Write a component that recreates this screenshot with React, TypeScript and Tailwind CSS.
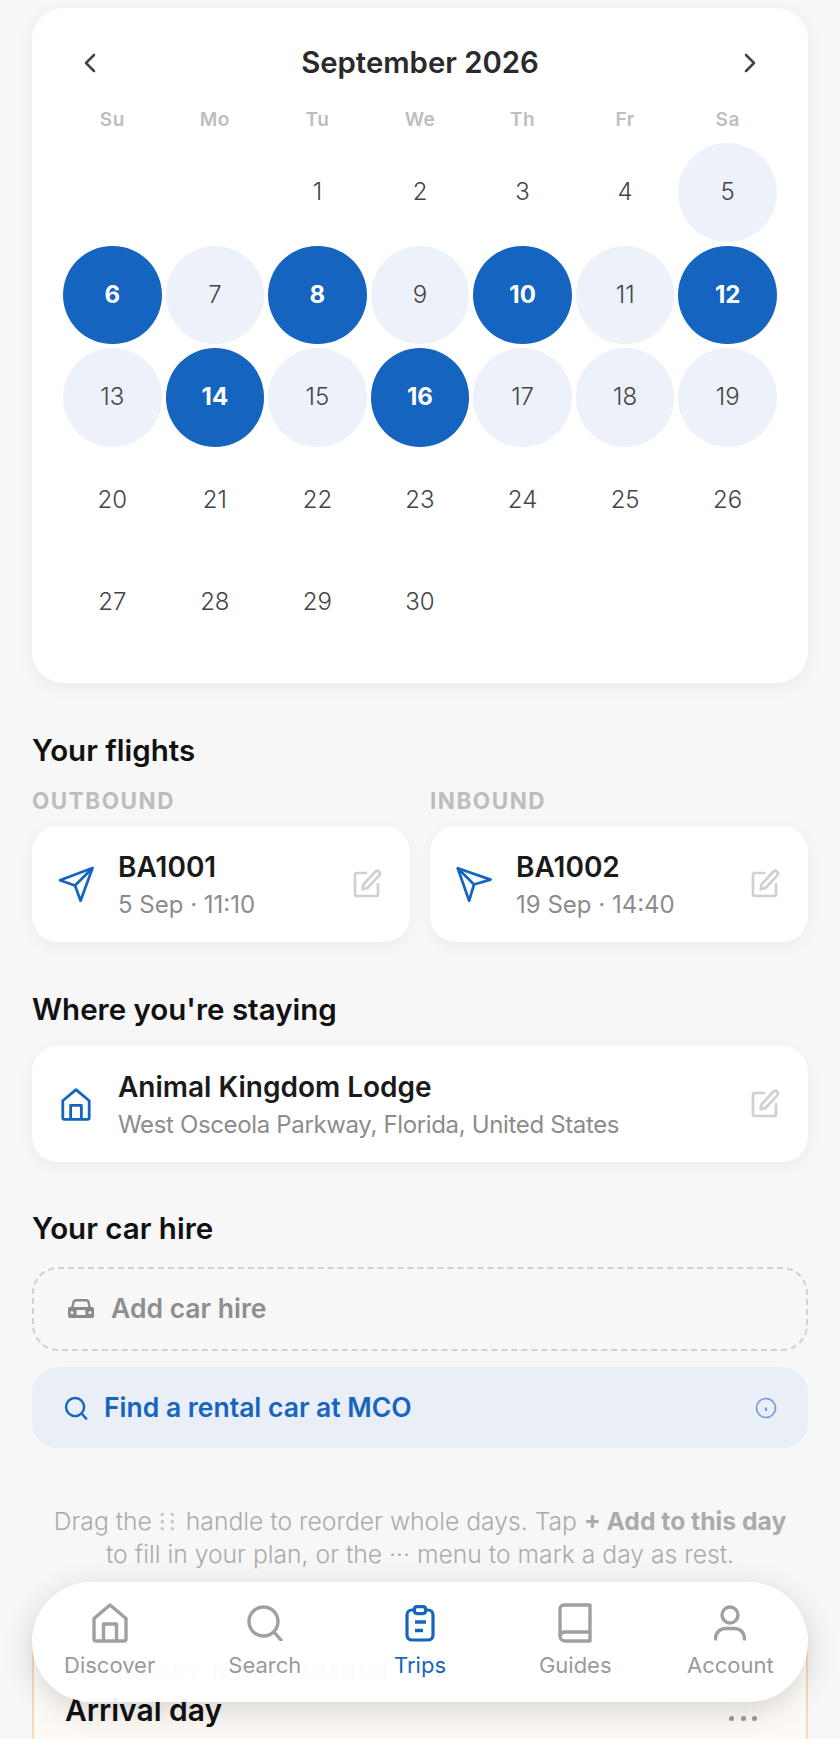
import React from "react";

const weekdays = ["Su", "Mo", "Tu", "We", "Th", "Fr", "Sa"];
const selected = [6, 8, 10, 12, 14, 16];
const inRange = [5, 7, 9, 11, 13, 15, 17, 18, 19];
const days: (number | null)[] = [
  null,
  null,
  ...Array.from({ length: 30 }, (_, i) => i + 1),
];

function Chevron({ dir }: { dir: "left" | "right" }) {
  return (
    <svg width="24" height="24" viewBox="0 0 24 24" fill="none" stroke="#444" strokeWidth="2.6" strokeLinecap="round" strokeLinejoin="round">
      <path d={dir === "left" ? "M16 4l-8 8 8 8" : "M8 4l8 8-8 8"} />
    </svg>
  );
}

function EditIcon() {
  return (
    <svg width="30" height="30" viewBox="0 0 30 30" fill="none" stroke="#d0d0d0" strokeWidth="2.7" strokeLinecap="round" strokeLinejoin="round">
      <path d="M14 4H5A2 2 0 0 0 3 6v19a2 2 0 0 0 2 2h19a2 2 0 0 0 2-2V15" />
      <path d="M23.500 2.500a2.700 2.700 0 0 1 3.800 3.800L15.500 19l-5 1.200 1.200-5z" />
    </svg>
  );
}

function PlaneOut() {
  return (
    <svg width="37" height="37" viewBox="-1.500 -1.500 37 37" fill="none" stroke="#1565c0" strokeWidth="2.800" strokeLinejoin="round">
      <path d="M34 0 .5 12.700 16 18l5.700 15.700z" />
      <path d="M34 0 16 18" />
    </svg>
  );
}

function PlaneIn() {
  return (
    <svg width="37" height="37" viewBox="-1.500 -1.500 37 37" fill="none" stroke="#1565c0" strokeWidth="2.800" strokeLinejoin="round">
      <path d="M.3.300 34 12 17 17l-5 16.700z" />
      <path d="M.3.300 17 17" />
    </svg>
  );
}

function HomeIcon({ width, height, color }: { width: number; height: number; color: string }) {
  return (
    <svg width={width} height={height} viewBox="0 0 36 40" fill="none" stroke={color} strokeWidth="3.400" strokeLinejoin="round">
      <path d="M18 2 2 15.500V36a2 2 0 0 0 2 2h28a2 2 0 0 0 2-2V15.500z" />
      <path d="M11.500 38V21h13v17" />
    </svg>
  );
}

function SectionTitle({ children }: { children: React.ReactNode }) {
  return <h2 className="text-[29.500px] leading-[36px] font-semibold text-[#111]">{children}</h2>;
}

function InfoCard({ icon, title, sub, subClass }: { icon: React.ReactNode; title: string; sub: string; subClass?: string }) {
  return (
    <div className="flex h-[116px] items-center rounded-[26px] bg-white pl-[26px] pr-[28px] shadow-[0_4px_16px_rgba(0,0,0,0.05)]">
      <div className="flex w-[36px] shrink-0 justify-center">{icon}</div>
      <div className="ml-[24px] min-w-0 flex-1 pt-[2px]">
        <div className="text-[28px] leading-[36px] font-semibold text-[#1a1a1a]">{title}</div>
        <div className={`mt-[4px] text-[24px] leading-[32px] text-[#8c8c8c] ${subClass ?? ""}`}>{sub}</div>
      </div>
      <EditIcon />
    </div>
  );
}

function NavItem({ icon, label, active }: { icon: React.ReactNode; label: string; active?: boolean }) {
  return (
    <div className="flex flex-1 flex-col items-center">
      <div className="flex h-[42px] items-center justify-center">{icon}</div>
      <div className={`mt-[7px] text-[22px] leading-[28px] ${active ? "text-[#1565c0]" : "text-[#9a9a9a]"}`}>{label}</div>
    </div>
  );
}

export default function App() {
  return (
    <div className="relative h-[1739px] w-[840px] overflow-hidden bg-[#f7f7f7] px-[32px] pt-[8px] font-['Inter',sans-serif]">
      <section className="h-[675px] rounded-[32px] bg-white px-[31px] pt-[33px] shadow-[0_4px_20px_rgba(0,0,0,0.05)]">
        <div className="flex h-[44px] items-center justify-between px-[15px]">
          <Chevron dir="left" />
          <div className="text-[29.300px] font-semibold text-[#2a2a2a]">September 2026</div>
          <Chevron dir="right" />
        </div>
        <div className="mt-[23px] grid grid-cols-7 gap-x-[4px]">
          {weekdays.map((d) => (
            <div key={d} className="text-center text-[19px] leading-[24px] font-semibold tracking-[0.5px] text-[#bdbdbd]">{d}</div>
          ))}
        </div>
        <div className="mt-[11px] grid grid-cols-7 gap-[4px]">
          {days.map((d, i) => {
            if (d === null) return <div key={i} className="h-[98.500px]" />;
            const isSel = selected.includes(d);
            const isRange = inRange.includes(d);
            return (
              <div
                key={i}
                className={`flex h-[98.500px] items-center justify-center rounded-full text-[24px] ${
                  isSel
                    ? "bg-[#1565c0] font-bold text-white"
                    : isRange
                      ? "bg-[#edf1fa] font-[350] text-[#444]"
                      : "font-[350] text-[#444]"
                }`}
              >
                {d}
              </div>
            );
          })}
        </div>
      </section>

      <div className="mt-[49px]">
        <SectionTitle>Your flights</SectionTitle>
        <div className="mt-[20px] grid grid-cols-2 gap-x-[20px]">
          <div>
            <div className="text-[22.500px] leading-[26px] font-bold tracking-[1.500px] text-[#bdbdbd]">OUTBOUND</div>
            <div className="mt-[12px]">
              <InfoCard icon={<PlaneOut />} title="BA1001" sub="5 Sep · 11:10" />
            </div>
          </div>
          <div>
            <div className="text-[22.500px] leading-[26px] font-bold tracking-[1.500px] text-[#bdbdbd]">INBOUND</div>
            <div className="mt-[12px]">
              <InfoCard icon={<PlaneIn />} title="BA1002" sub="19 Sep · 14:40" />
            </div>
          </div>
        </div>
      </div>

      <div className="mt-[49px]">
        <SectionTitle>Where you're staying</SectionTitle>
        <div className="mt-[19px]">
          <InfoCard
            icon={<HomeIcon width={30} height={33} color="#1565c0" />}
            title="Animal Kingdom Lodge"
            sub="West Osceola Parkway, Florida, United States"
            subClass="tracking-[-0.35px]"
          />
        </div>
      </div>

      <div className="mt-[48px]">
        <SectionTitle>Your car hire</SectionTitle>
        <div className="mt-[21px] flex h-[84px] items-center rounded-[26px] border-2 border-dashed border-[#d0d0d0] pl-[33px]">
          <svg width="28" height="20" viewBox="0 0 28 20" fill="none">
            <path d="M5 10 6.500 3A2.500 2.500 0 0 1 9 1.300h10A2.500 2.500 0 0 1 21.500 3L23 10" stroke="#8a8a8a" strokeWidth="2.400" />
            <rect x="1" y="8" width="26" height="11" rx="2" fill="#8a8a8a" />
            <rect x="9.500" y="11" width="9" height="5" rx="1" fill="#f7f7f7" />
            <circle cx="5" cy="13.500" r="1.500" fill="#f7f7f7" />
            <circle cx="23" cy="13.500" r="1.500" fill="#f7f7f7" />
          </svg>
          <span className="ml-[16px] text-[26.500px] font-semibold text-[#8e8e8e]">Add car hire</span>
        </div>
        <div className="mt-[16px] flex h-[81px] items-center rounded-[26px] bg-[#eaeef6] pl-[32px] pr-[31px]">
          <svg width="24" height="24" viewBox="0 0 26 26" fill="none" stroke="#1565c0" strokeWidth="2.600" strokeLinecap="round">
            <circle cx="12" cy="12" r="9.800" />
            <path d="M19.500 19.500 24 24.500" />
          </svg>
          <span className="ml-[16px] flex-1 text-[26.500px] font-semibold text-[#1565c0]">Find a rental car at MCO</span>
          <svg width="22" height="22" viewBox="0 0 22 22" fill="none" stroke="#6a9bd8" strokeWidth="1.600">
            <circle cx="11" cy="11" r="9.500" />
            <path d="M11 10.500v3.500" strokeWidth="2" />
          </svg>
        </div>
      </div>

      <p className="mt-[57px] text-center text-[24.700px] leading-[33px] font-[350] text-[#ababab]">
        Drag the <span className="tracking-[3px] text-[#c4c4c4]">⁝⁝</span> handle to reorder whole days. Tap <b className="font-bold">+ Add to this day</b>
        <br />
        to fill in your plan, or the ··· menu to mark a day as rest.
      </p>

      <section className="mt-[50px] h-[300px] rounded-[26px] border-2 border-[#f6d9b8] bg-gradient-to-b from-white to-[#fbf0e4] px-[31px] pt-[36px]">
        <div className="text-[23px] leading-[28px] font-bold tracking-[1.800px] text-[#bdbdbd]">SATURDAY 5 SEPTEMBER</div>
        <div className="mt-[4px] flex items-center justify-between">
          <span className="text-[30px] leading-[38px] font-semibold text-[#111]">Arrival day</span>
          <div className="mt-[16px] mr-[18px] flex gap-[6.500px]">
            <span className="size-[5px] rounded-full bg-[#999]" />
            <span className="size-[5px] rounded-full bg-[#999]" />
            <span className="size-[5px] rounded-full bg-[#999]" />
          </div>
        </div>
      </section>

      <nav className="absolute left-[32px] top-[1582px] flex h-[120px] w-[776px] items-start rounded-[60px] bg-white/95 pt-[20px] shadow-[0_8px_32px_rgba(0,0,0,0.16)]">
        <NavItem label="Discover" icon={<HomeIcon width={36} height={40} color="#a0a0a0" />} />
        <NavItem
          label="Search"
          icon={
            <svg width="36" height="36" viewBox="0 0 36 36" fill="none" stroke="#a0a0a0" strokeWidth="3.400" strokeLinecap="round">
              <circle cx="16.500" cy="16.500" r="14.500" />
              <path d="M27 27 34 35" />
            </svg>
          }
        />
        <NavItem
          label="Trips"
          active
          icon={
            <svg width="30" height="37" viewBox="0 0 30 37" fill="none" stroke="#1565c0" strokeWidth="3.200" strokeLinejoin="round">
              <rect x="2" y="5" width="26" height="30" rx="5" />
              <rect x="9.500" y="1.600" width="11" height="7" rx="2.500" fill="#fff" />
              <path d="M10 17h11M10 25.500h8" strokeWidth="3.500" />
            </svg>
          }
        />
        <NavItem
          label="Guides"
          icon={
            <svg width="34" height="40" viewBox="0 0 34 40" fill="none" stroke="#a0a0a0" strokeWidth="3.400" strokeLinejoin="round">
              <path d="M2 33V6a4 4 0 0 1 4-4h26v36H7a5 5 0 0 1-5-5z" />
              <path d="M2 33a5 5 0 0 1 5-4h25" />
            </svg>
          }
        />
        <NavItem
          label="Account"
          icon={
            <svg width="36" height="36" viewBox="0 0 36 36" fill="none" stroke="#a0a0a0" strokeWidth="3.400" strokeLinecap="round">
              <circle cx="18" cy="10" r="8" />
              <path d="M3.500 34c0-6 4-10.500 10-10.500h9c6 0 10 4.500 10 10.500" />
            </svg>
          }
        />
      </nav>
    </div>
  );
}
